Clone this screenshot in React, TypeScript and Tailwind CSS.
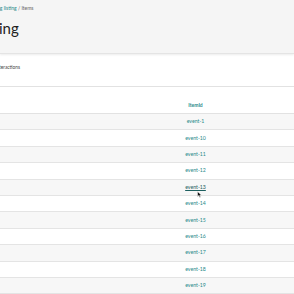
const rows = [1, 10, 11, 12, 13, 14, 15, 16, 17, 18, 19];

export default function App() {
  return (
    <div
      className="w-[294px] h-[294px] overflow-hidden bg-white text-[#333]"
      style={{ fontFamily: "Lato, 'Open Sans', sans-serif" }}
    >
      <div className="h-[54px] bg-[#f5f5f5] border-b border-[#e4e4e4] shadow-[0_1px_2px_rgba(0,0,0,0.08)]">
        <div className="pt-[6px] text-[5px] leading-[5px] -ml-[3px] whitespace-nowrap">
          <span className="text-[#1f8a8a]">ng listing</span>
          <span className="text-[#666]"> / Items</span>
        </div>
        <h1 className="mt-[9px] text-[15px] leading-[16px] -ml-[1px] text-[#222] whitespace-nowrap">
          ing
        </h1>
      </div>
      <div className="h-[33px] border-b border-[#e2e2e2] pt-[11px]">
        <span className="block text-[4.8px] leading-[5px] -ml-[1px] text-[#444] whitespace-nowrap">
          teractions
        </span>
      </div>
      <div className="grid grid-cols-[97px_1fr] h-[27px] border-b border-[#e2e2e2] shadow-[0_1px_1px_rgba(0,0,0,0.05)]">
        <div />
        <div className="flex items-end justify-center pb-[4px] text-[5px] font-bold text-[#1f8a8a]">
          ItemId
        </div>
      </div>
      {rows.map((n, i) => (
        <div
          key={n}
          className={
            "grid grid-cols-[97px_1fr] h-[16.4px] border-b border-[#e4e4e4] " +
            (i % 2 === 0 ? "bg-[#f7f7f7]" : "bg-white")
          }
        >
          <div />
          <div className="relative flex items-center justify-center pt-[1px] text-[5.2px]">
            {n === 13 ? (
              <span className="underline text-[#1d5f5f]">event-13</span>
            ) : (
              <span className="text-[#1f8a8a]">event-{n}</span>
            )}
            {n === 13 && (
              <svg
                className="absolute left-[100px] top-[11px] w-[5px] h-[7px]"
                viewBox="0 0 10 14"
              >
                <path
                  d="M1 1 L1 11.5 L3.6 9 L5.6 13 L7.3 12.2 L5.4 8.3 L9 8.3 Z"
                  fill="#111"
                  stroke="#fff"
                  strokeWidth={1}
                  strokeLinejoin="round"
                />
              </svg>
            )}
          </div>
        </div>
      ))}
    </div>
  );
}
